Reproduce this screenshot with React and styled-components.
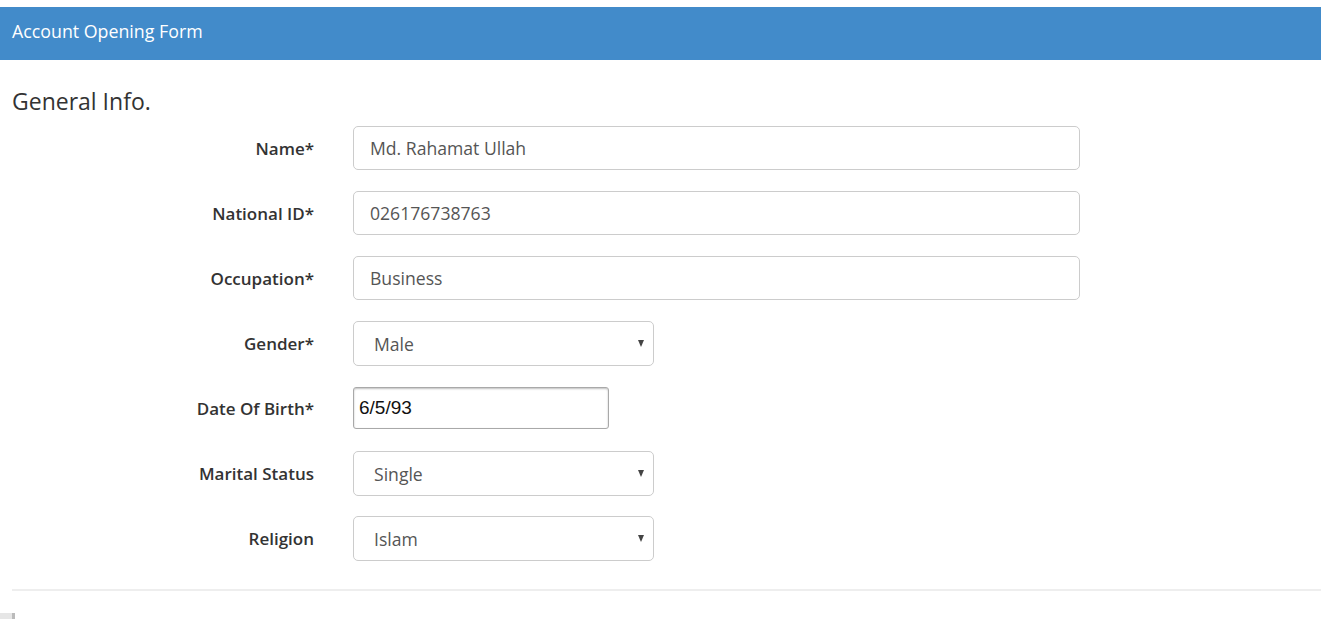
import React from 'react';
import styled, { createGlobalStyle } from 'styled-components';

const GlobalStyle = createGlobalStyle`
  html, body {
    margin: 0;
    padding: 0;
    background: #fff;
  }
  body {
    font-family: "Open Sans", "Liberation Sans", sans-serif;
    color: #333;
  }
`;

const Page = styled.div`
  padding-top: 7px;
`;

const Header = styled.div`
  box-sizing: border-box;
  background: #428bca;
  height: 53px;
  display: flex;
  align-items: center;
  padding: 0 12px 6px;
  color: #fff;
  font-size: 17.8px;
`;

const Body = styled.div`
  padding: 0 0 0 12px;
`;

const Title = styled.h3`
  margin: 0;
  padding-top: 26px;
  font-size: 23px;
  font-weight: 400;
  line-height: 30px;
  color: #333;
`;

const Fields = styled.div`
  display: flex;
  flex-direction: column;
  gap: 21px;
  margin-top: 10px;
`;

const Row = styled.div`
  display: grid;
  grid-template-columns: 302px 1fr;
  column-gap: 39px;
  align-items: center;
  height: 44px;
`;

const Label = styled.label`
  text-align: right;
  font-weight: 600;
  font-size: 17px;
  color: #333;
`;

const TextInput = styled.input`
  box-sizing: border-box;
  width: ${p => p.$width}px;
  height: 44px;
  border: 1px solid #ccc;
  border-radius: 5px;
  padding: 0 16px;
  font-family: "Open Sans", "Liberation Sans", sans-serif;
  font-size: 17.6px;
  color: #555;
  outline: none;
`;

const DateInput = styled.input`
  box-sizing: border-box;
  width: 256px;
  height: 42px;
  border: 1px solid #a9a9a9;
  border-radius: 3px;
  box-shadow: inset 0 1px 2px rgba(0, 0, 0, 0.25);
  padding: 0 5px;
  font-family: "Liberation Sans", Arial, sans-serif;
  font-size: 19px;
  color: #111;
  outline: none;
`;

const SelectWrap = styled.div`
  position: relative;
  width: 301px;

  &::after {
    content: "";
    position: absolute;
    right: 10px;
    top: 19px;
    border-left: 3.5px solid transparent;
    border-right: 3.5px solid transparent;
    border-top: 7px solid #444;
    pointer-events: none;
  }
`;

const Select = styled.select`
  box-sizing: border-box;
  appearance: none;
  width: 100%;
  height: 45px;
  border: 1px solid #ccc;
  border-radius: 5px;
  padding: 0 20px;
  background: #fff;
  font-family: "Open Sans", "Liberation Sans", sans-serif;
  font-size: 17.6px;
  color: #555;
  outline: none;
`;

const Rule = styled.hr`
  margin: 29px 0 0;
  border: 0;
  border-top: 2px solid #eee;
`;

const Stub = styled.div`
  width: 15px;
  height: 6px;
  margin: 22px 0 0 -12px;
  background: linear-gradient(to right, #e6e6e6 0 12px, #bbb 12px 15px);
`;

const fields = [
  { label: 'Name*', type: 'text', value: 'Md. Rahamat Ullah' },
  { label: 'National ID*', type: 'text', value: '026176738763' },
  { label: 'Occupation*', type: 'text', value: 'Business' },
  { label: 'Gender*', type: 'select', value: 'Male', options: ['Male', 'Female'] },
  { label: 'Date Of Birth*', type: 'date', value: '6/5/93' },
  { label: 'Marital Status', type: 'select', value: 'Single', options: ['Single', 'Married'] },
  { label: 'Religion', type: 'select', value: 'Islam', options: ['Islam', 'Hinduism', 'Christianity', 'Buddhism'] },
];

function Field({ f }) {
  if (f.type === 'select') {
    return (
      <SelectWrap>
        <Select defaultValue={f.value}>
          {f.options.map(o => <option key={o}>{o}</option>)}
        </Select>
      </SelectWrap>
    );
  }
  if (f.type === 'date') {
    return <DateInput type="text" defaultValue={f.value} />;
  }
  return <TextInput type="text" $width={727} defaultValue={f.value} />;
}

export default function App() {
  return (
    <Page>
      <GlobalStyle />
      <Header>Account Opening Form</Header>
      <Body>
        <Title>General Info.</Title>
        <Fields>
          {fields.map(f => (
            <Row key={f.label}>
              <Label>{f.label}</Label>
              <Field f={f} />
            </Row>
          ))}
        </Fields>
        <Rule />
        <Stub />
      </Body>
    </Page>
  );
}
